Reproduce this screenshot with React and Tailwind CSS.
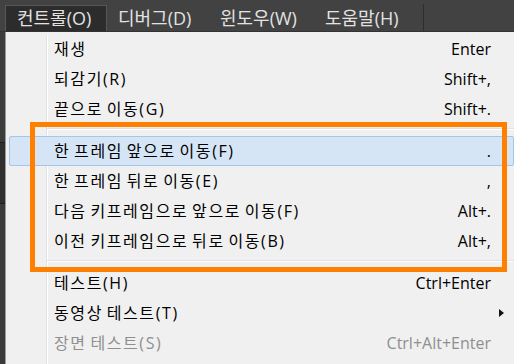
import React from "react";

const FONT = { fontFamily: "'Open Sans','Noto Sans CJK KR',sans-serif" };

const items = [
  { label: "재생", sc: "Enter" },
  { label: "되감기(R)", sc: "Shift+," },
  { label: "끝으로 이동(G)", sc: "Shift+." },
  "sep",
  { label: "한 프레임 앞으로 이동(F)", sc: ".", hl: true },
  { label: "한 프레임 뒤로 이동(E)", sc: "," },
  { label: "다음 키프레임으로 앞으로 이동(F)", sc: "Alt+." },
  { label: "이전 키프레임으로 뒤로 이동(B)", sc: "Alt+," },
  "sep",
  { label: "테스트(H)", sc: "Ctrl+Enter" },
  { label: "동영상 테스트(T)", arrow: true },
  { label: "장면 테스트(S)", sc: "Ctrl+Alt+Enter", disabled: true },
];

function Row({ item }) {
  const base = item.hl
    ? "bg-[#d5e5f5] border-[#a3c6ea]"
    : "border-transparent";
  const color = item.disabled ? "text-[#8f8f8f]" : "text-[#000]";
  return (
    <div
      className={`relative z-10 flex h-[30px] items-center border rounded-[2px] ${base} ${color}`}
    >
      <div className="flex-1 pl-[44px] text-[16px] tracking-[1.6px] [word-spacing:-2px] whitespace-nowrap">
        {item.label}
      </div>
      <div className="text-[16px] whitespace-nowrap">{item.sc || ""}</div>
      <div className="w-[22px] flex items-center pl-[8px]">
        {item.arrow && (
          <svg width="5" height="8" viewBox="0 0 5 8">
            <path d="M0 0 L5 4 L0 8 Z" fill="#111" />
          </svg>
        )}
      </div>
    </div>
  );
}

function Sep() {
  return (
    <div className="relative z-10 h-[12px] pl-[38px] pt-[4px]">
      <div className="h-px bg-[#e0e0e0]" />
      <div className="h-px bg-white" />
    </div>
  );
}

export default function App() {
  const bar = [
    { t: "컨트롤(O)", w: "w-[102px]", active: true },
    { t: "디버그(D)", w: "w-[102px]" },
    { t: "윈도우(W)", w: "w-[105px]" },
    { t: "도움말(H)", w: "w-[109px]" },
  ];
  return (
    <div
      className="relative w-[514px] h-[364px] overflow-hidden bg-[#363636]"
      style={FONT}
    >
      {/* Menu bar */}
      <div className="flex h-[32px] items-end bg-[#424242] pl-[5px] border-b border-[#333]">
        {bar.map((b) => (
          <div
            key={b.t}
            className={`${b.w} h-[26px] flex items-center pl-[11px] text-[18px] text-[#e2e2e2] whitespace-nowrap ${
              b.active ? "bg-[#2c2c2c] border border-[#555] border-b-0" : ""
            }`}
          >
            {b.t}
          </div>
        ))}
        <div className="w-px h-[27px] bg-[#2e2e2e]" />
      </div>

      {/* Body */}
      <div className="flex h-[332px]">
        <div className="w-[5px] flex flex-col">
          <div className="h-[110px] bg-[#3c3c3c]" />
          <div className="h-px bg-[#1e1e1e]" />
          <div className="h-[60px] bg-[#2f2f2f]" />
          <div className="h-px bg-[#1e1e1e]" />
          <div className="flex-1 bg-[#3a3a3a]" />
        </div>
        <div className="relative flex-1 bg-[#f0f0f0] border-l border-[#9a9a9a] pt-[2px] pl-[3px]">
          <div className="absolute left-[40px] top-[3px] bottom-0 flex">
            <div className="w-px bg-[#e2e2e2]" />
            <div className="w-px bg-white" />
          </div>
          {items.map((it, i) =>
            it === "sep" ? <Sep key={i} /> : <Row key={i} item={it} />
          )}
        </div>
      </div>

      {/* Annotation box */}
      <div className="absolute left-[30px] top-[122px] w-[477px] h-[150px] border-[5px] border-[#ff7f00] z-20" />
    </div>
  );
}
